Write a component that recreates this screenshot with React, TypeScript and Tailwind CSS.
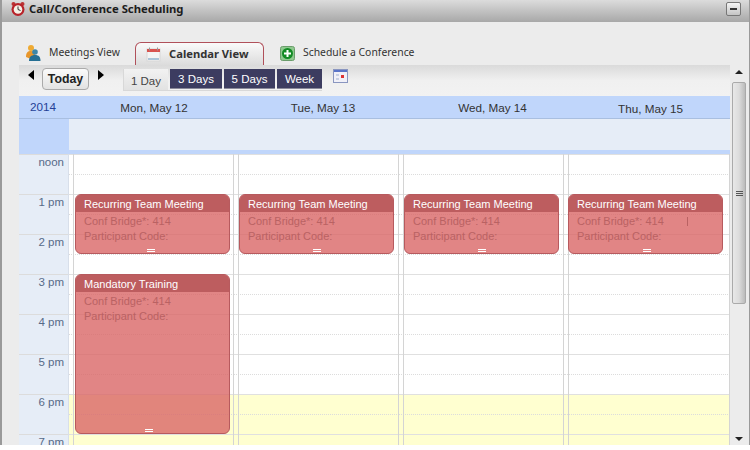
const sans = "font-['Liberation_Sans',Arial,sans-serif]";
const tah = "font-['Noto_Sans',sans-serif]";

function ClockIcon() {
  return (
    <svg width="16" height="16" viewBox="0 0 16 16">
      <circle cx="3.5" cy="3" r="2" fill="#b33" />
      <circle cx="12.5" cy="3" r="2" fill="#b33" />
      <circle cx="8" cy="8.5" r="6.5" fill="#b8232a" />
      <circle cx="8" cy="8.5" r="4.3" fill="#f6f1e6" />
      <path d="M8 5.5V8.5L10.5 9.5" stroke="#333" strokeWidth="1" fill="none" />
    </svg>
  );
}
function UsersIcon() {
  return (
    <svg width="16" height="18" viewBox="0 0 16 18">
      <circle cx="6" cy="4" r="3" fill="#eeaa33" />
      <path d="M1 13C1 8 3 7 6 7C9 7 10 9 10 11L6 15Z" fill="#e8962a" />
      <circle cx="10" cy="8" r="2.8" fill="#3c86a8" />
      <path d="M4 17C4 13 6 11 10 11C14 11 15.5 13 15.5 17Z" fill="#256f93" />
    </svg>
  );
}
function CalIcon() {
  return (
    <svg width="15" height="15" viewBox="0 0 15 15">
      <rect x="1" y="2" width="13" height="12" fill="#f4f4f4" stroke="#d8d8d8" />
      <rect x="1" y="2" width="13" height="3" fill="#d9534f" />
      <rect x="3" y="0.5" width="1" height="3" fill="#999" />
      <rect x="11" y="0.5" width="1" height="3" fill="#999" />
      <path d="M2 12H13" stroke="#a9c4d8" strokeWidth="2" />
    </svg>
  );
}
function PlusIcon() {
  return (
    <svg width="15" height="15" viewBox="0 0 15 15">
      <rect x="0.5" y="0.5" width="14" height="14" rx="2" fill="#8fc98f" stroke="#6b9d6b" />
      <circle cx="7.5" cy="7.5" r="5.5" fill="#128a24" />
      <path d="M7.5 4V11M4 7.5H11" stroke="#fff" strokeWidth="2" />
    </svg>
  );
}
function MiniCal() {
  return (
    <svg width="15" height="14" viewBox="0 0 15 14">
      <rect x="0.5" y="0.5" width="14" height="13" fill="#f0f0f8" stroke="#8a96c0" />
      <rect x="1" y="1" width="13" height="2" fill="#5a74c8" />
      <rect x="8" y="6" width="3" height="3" fill="#d33" />
      <rect x="3" y="5" width="3" height="2" fill="#c8d0e4" />
      <rect x="3" y="9" width="3" height="2" fill="#c8d0e4" />
    </svg>
  );
}

function EventCard({ title, h, extra, grip }: { title: string; h: string; extra?: boolean; grip: string }) {
  return (
    <div className={`absolute top-0 left-[6px] w-[155px] ${h} rounded-[6px] border border-[#b75a5e] bg-[rgba(217,102,102,0.8)] overflow-hidden flex flex-col`}>
      <div className="h-[17px] shrink-0 bg-[#bd5d5f] pl-[8px] pt-[1px] text-[11px] leading-[17px] text-white whitespace-nowrap">{title}</div>
      <div className="pl-[8px] pt-[2px] text-[11px] leading-[15px] text-[#b96263] whitespace-nowrap">
        <div className="relative">
          Conf Bridge*: 414
          {extra && <span className="absolute left-[110px] top-[3px] h-[9px] w-px bg-[#b96263]" />}
        </div>
        <div>Participant Code:</div>
      </div>
      <div className={`mt-auto mb-[1px] ${grip} flex w-[8px] flex-col gap-px`}>
        <div className="h-px bg-white" />
        <div className="h-px bg-white" />
      </div>
    </div>
  );
}

const hours = ["noon", "1 pm", "2 pm", "3 pm", "4 pm", "5 pm", "6 pm", "7 pm"];

function HourRow({ yellow }: { yellow: boolean }) {
  return (
    <div className={`h-[40px] border-t border-[#e0e0e0] ${yellow ? "bg-[#ffffd0]" : "bg-white"}`}>
      <div className="h-[20px] border-b border-dotted border-[#dcdcdc]" />
    </div>
  );
}

function DayColumn({ className, children }: { className: string; children?: React.ReactNode }) {
  return (
    <div className={`relative ${className}`}>
      {hours.map((h, i) => (
        <HourRow key={h} yellow={i >= 6} />
      ))}
      <div className="absolute left-[4px] top-0 bottom-0 w-px bg-[#d4d4d4]" />
      <div className="absolute right-0 top-0 bottom-0 w-px bg-[#d4d4d4]" />
      <div className="absolute inset-x-0 top-[40px] bottom-0">{children}</div>
    </div>
  );
}

function RangeBtn({ label, w }: { label: string; w: string }) {
  return (
    <div className={`${w} h-[20px] bg-[#3c3c60] text-center text-[11.5px] leading-[21px] text-white border-b border-[#8a8a9a]`}>{label}</div>
  );
}

export default function App() {
  return (
    <div className={`w-[750px] h-[450px] bg-white overflow-hidden ${sans}`}>
      <div className="h-[445px] flex flex-col border-l-2 border-r border-[#9a9a9a] bg-[#ececec]">
        {/* Title bar */}
        <div className="h-[22px] shrink-0 flex items-center bg-gradient-to-b from-[#dcdcdc] to-[#a8a8a8] pl-[8px] pr-[8px] pb-[4px]">
          <ClockIcon />
          <span className={`ml-[3px] text-[11.3px] font-bold text-[#1c1c1c] ${tah}`}>Call/Conference Scheduling</span>
          <div className="ml-auto flex h-[14px] w-[15px] items-center justify-center rounded-[2px] border border-[#777] bg-gradient-to-b from-[#f4f4f4] to-[#c4c4c4]">
            <div className="h-[2px] w-[7px] bg-[#333]" />
          </div>
        </div>

        {/* Tabs */}
        <div className={`h-[43px] shrink-0 flex items-end pl-[23px] text-[10.4px] text-[#333] ${tah}`}>
          <div className="flex h-[26px] items-center mb-[-1px]">
            <UsersIcon />
            <span className="ml-[8px] w-[71px] whitespace-nowrap">Meetings View</span>
          </div>
          <div className="ml-[15px] flex h-[23px] w-[129px] items-center rounded-t-[6px] border border-b-0 border-[#b0505a] bg-gradient-to-b from-[#fafafa] to-[#dcdcdc] pl-[10px]">
            <CalIcon />
            <span className="ml-[8px] text-[11.2px] font-bold">Calendar View</span>
          </div>
          <div className="ml-[16px] flex h-[24px] items-center">
            <PlusIcon />
            <span className="ml-[8px]">Schedule a Conference</span>
          </div>
        </div>

        <div className="flex-1 min-h-0 flex">
          <div className="w-[17px] shrink-0" />
          <div className="w-[711px] shrink-0 flex flex-col">
            {/* Toolbar */}
            <div className="h-[31px] shrink-0 flex items-start bg-gradient-to-b from-[#dadada] via-[#f0f0f0] to-[#f2f2f2] pt-[3px]">
              <div className="ml-[9px] mt-[2px] h-0 w-0 border-y-[5px] border-r-[6px] border-y-transparent border-r-black" />
              <div className="ml-[8px] h-[22px] w-[47px] rounded-[4px] border border-[#aaa] bg-gradient-to-b from-[#fbfbfb] to-[#e2e2e2] text-center text-[12.3px] font-bold leading-[21px] text-[#222]">Today</div>
              <div className="ml-[9px] mt-[2px] h-0 w-0 border-y-[5px] border-l-[6px] border-y-transparent border-l-black" />
              <div className="ml-[19px] mt-[1px] flex gap-[2px] border-b border-[#d8d8d8]">
                <div className="h-[21px] w-[45px] bg-gradient-to-b from-[#f2f2f2] to-[#e2e2e2] border-l border-[#d8d8d8] text-center text-[11.5px] leading-[24px] text-[#444]">1 Day</div>
                <RangeBtn label="3 Days" w="w-[52px]" />
                <RangeBtn label="5 Days" w="w-[51px]" />
                <RangeBtn label="Week" w="w-[45px]" />
              </div>
              <div className="ml-[11px] mt-[1px]"><MiniCal /></div>
            </div>

            {/* Header */}
            <div className="h-[23px] shrink-0 flex items-center bg-[#c0d6fb] border-b border-[#a9bfe0] text-[11.7px] text-[#333]">
              <div className="w-[50px] pl-[11px] text-[#243f96]">2014</div>
              <div className="w-[170px] pt-[1px] text-center">Mon, May 12</div>
              <div className="w-[168px] pt-[1px] text-center">Tue, May 13</div>
              <div className="w-[171px] pt-[1px] text-center">Wed, May 14</div>
              <div className="w-[145px] pt-[3px] text-center">Thu, May 15</div>
            </div>

            {/* All day */}
            <div className="h-[31px] shrink-0 flex bg-[#c0d6fb]">
              <div className="w-[50px]" />
              <div className="flex-1 bg-[#e6edf7]" />
            </div>
            <div className="h-[4px] shrink-0 bg-[#c0d6fb]" />

            {/* Grid */}
            <div className="flex-1 min-h-0 overflow-hidden flex">
              <div className="w-[50px] shrink-0 bg-[#e6edf7] border-r border-[#d8dfea]">
                {hours.map((h) => (
                  <div key={h} className="h-[40px] border-t border-[#dcdcdc] pr-[4px] text-right text-[11.5px] leading-[15px] text-[#566a88]">{h}</div>
                ))}
              </div>
              <div className="flex-1 flex">
                <DayColumn className="w-[165px]">
                  <EventCard title="Recurring Team Meeting" h="h-[60px]" grip="ml-[71px]" />
                  <div className="absolute inset-x-0 top-[80px]">
                    <EventCard title="Mandatory Training" h="h-[160px]" grip="ml-[69px]" />
                  </div>
                </DayColumn>
                <DayColumn className="w-[165px]"><div className="absolute inset-0 left-[-1px]"><EventCard title="Recurring Team Meeting" h="h-[60px]" grip="ml-[73px]" /></div></DayColumn>
                <DayColumn className="w-[165px]"><div className="absolute inset-0 left-[-1px]"><EventCard title="Recurring Team Meeting" h="h-[60px]" grip="ml-[73px]" /></div></DayColumn>
                <DayColumn className="flex-1"><div className="absolute inset-0 left-[-2px]"><EventCard title="Recurring Team Meeting" h="h-[60px]" extra grip="ml-[74px]" /></div></DayColumn>
              </div>
            </div>
          </div>

          {/* Scrollbar */}
          <div className="w-[18px] shrink-0 flex flex-col items-center bg-[#ececec]">
            <div className="mt-[5px] h-0 w-0 border-x-[4px] border-b-[4px] border-x-transparent border-b-[#222]" />
            <div className="mt-[8px] h-[222px] w-[14px] flex items-center justify-center rounded-[2px] border border-[#aaa] bg-gradient-to-r from-[#e8e8e8] via-[#dcdcdc] to-[#bbb]">
              <div className="flex w-[7px] flex-col gap-px">
                <div className="h-px bg-[#555]" />
                <div className="h-px bg-[#555]" />
                <div className="h-px bg-[#555]" />
              </div>
            </div>
            <div className="mt-auto mb-[4px] h-0 w-0 border-x-[4px] border-t-[4px] border-x-transparent border-t-[#222]" />
          </div>
        </div>
      </div>
    </div>
  );
}
